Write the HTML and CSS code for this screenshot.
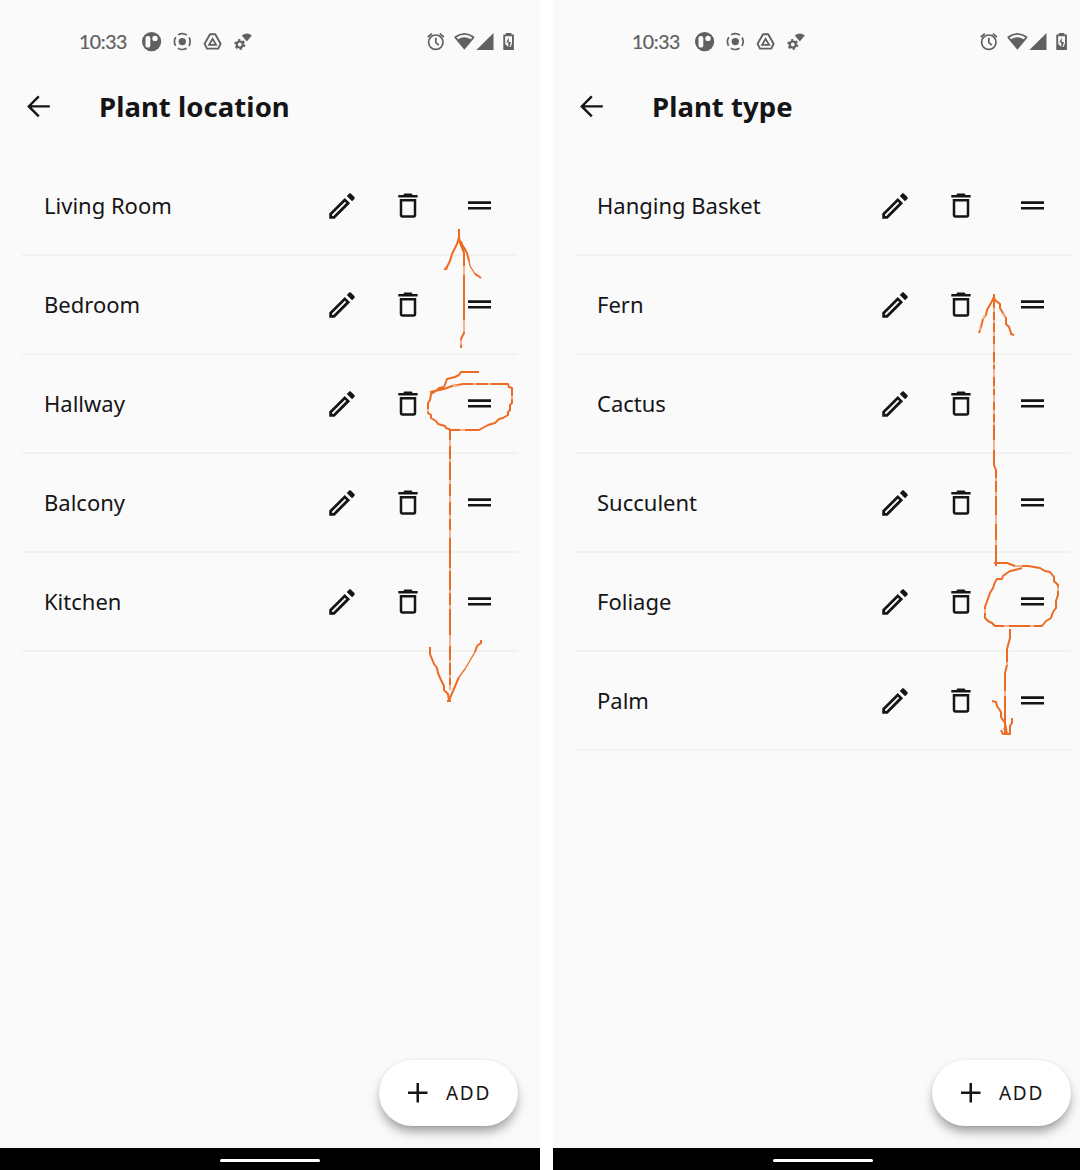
FILE: index.html
```
<!DOCTYPE html>
<html lang="en">
<head>
<meta charset="utf-8">
<title>Plant settings</title>
<link rel="stylesheet" href="styles.css">
<script src="lists.js" defer></script>
</head>
<body>
<svg class="sprite" aria-hidden="true">
  <symbol id="left-status" viewBox="0 0 120 24">
    <circle cx="14.600" cy="11.600" r="9.600"/>
    <rect x="8.500" y="6" width="4.800" height="11.600" rx="2.200" fill="#fafafa"/>
    <circle cx="18" cy="8.400" r="2.700" fill="#fafafa"/>
    <circle cx="45.300" cy="11.600" r="3.700"/>
    <circle cx="45.300" cy="11.600" r="7.900" fill="none" stroke="currentColor" stroke-width="1.700" stroke-dasharray="9.200 3.210" stroke-dashoffset="4.600"/>
    <path d="M73 4.200h5.200l5.400 9.600-2.400 4.800H70l-2.400-4.800z" fill="none" stroke="currentColor" stroke-width="1.900" stroke-linejoin="round"/>
    <path d="M75.600 8.900l3.500 6h-7z" fill="none" stroke="currentColor" stroke-width="1.800"/>
    <circle cx="102.800" cy="14.500" r="3" fill="none" stroke="currentColor" stroke-width="2.200"/>
    <circle cx="102.800" cy="14.500" r="4.600" fill="none" stroke="currentColor" stroke-width="1.800" stroke-dasharray="2.400 2.417"/>
    <path d="M104.800 5.400q5-3.800 10 0l-5 6z"/>
  </symbol>
  <symbol id="right-status" viewBox="0 0 96 24">
    <circle cx="15.800" cy="12.200" r="7.200" fill="none" stroke="currentColor" stroke-width="1.700"/>
    <path d="M15.800 7.700v4.900l3 2.500M7.800 7l4-3.400M23.800 7l-4-3.400" fill="none" stroke="currentColor" stroke-width="1.700"/>
    <path d="M35 7.300q9.400-6.800 18.800 0" fill="none" stroke="currentColor" stroke-width="1.800"/>
    <path d="M34.200 7.400L44.400 19.700 54.600 7.400 53 6.400 50.800 9.200q-6.400-4-12.800 0L35.800 6.400z"/>
    <path d="M56.400 20L73.500 3v17z"/>
    <path d="M83.300 4.400h2.500V3h5.600v1.400h2.500V20H83.300z"/>
    <path d="M85.200 6.200h6.800v7.300l-1.500 3.500h-1l1.500-5h-2.200V7.400L86.300 12.600h2v4.400L85.200 14z" fill="#fafafa"/>
  </symbol>
  <symbol id="back" viewBox="0 0 24 24"><path d="M11.800 1.400L1.800 11.400l10 10M2 11.400h20.800" fill="none" stroke="currentColor" stroke-width="2.400"/></symbol>
  <symbol id="edit" viewBox="0 0 24 24"><path d="M14.060 9.020l.920.920L5.920 19H5v-.920l9.060-9.060M17.660 3c-.250 0-.510.100-.700.290l-1.600 1.600 3.750 3.750 1.600-1.600c.390-.390.390-1.020 0-1.410l-2.340-2.340c-.200-.200-.450-.290-.710-.290zm-3.700 3.290L3 17.250V21h3.750L17.710 10.040l-3.750-3.750z"/></symbol>
  <symbol id="trash" viewBox="0 0 20 26">
    <path d="M.3 1.900h5l1-1.300h7.300l1 1.300h5v2.500H.3z"/>
    <path d="M3 7.200h14v14.900q0 1.400-1.400 1.400H4.400Q3 23.500 3 22.100z" fill="none" stroke="currentColor" stroke-width="2.500"/>
  </symbol>
  <symbol id="handle" viewBox="0 0 23 9"><path d="M0 .3h23v2.600H0zM0 6h23v2.600H0z"/></symbol>
  <symbol id="plus" viewBox="0 0 20 20"><path d="M8.500 0h2.500v8.500h8.500v2.500H11v8.500H8.500V11H0V8.500h8.500z"/></symbol>
</svg>
<main class="screens">
  <section class="phone">
    <header class="status"><span class="clock">10:33</span><svg class="status-left"><use href="#left-status"/></svg><svg class="status-right"><use href="#right-status"/></svg></header>
    <div class="appbar"><svg class="back"><use href="#back"/></svg><h1>Plant location</h1></div>
    <ul class="list" data-items="Living Room,Bedroom,Hallway,Balcony,Kitchen"></ul>
    <div class="actions"><button class="add"><svg class="plus"><use href="#plus"/></svg><span>ADD</span></button></div>
    <footer class="navbar"><i></i></footer>
    <svg class="ink" viewBox="0 0 540 1170">
      <path d="M459 229v8l-2 7-5 10-2 7-3 6-1 3M459 237l1 6 2 5 2 5v80l-3 6v9M461 241l2 6 4 6 2 8M475 274l2 1 4 3"/>
      <path class="thin" d="M446 267l-2 3M469 261l1 5 5 8M460 241l6 9"/>
      <path d="M479 372h-18l-2 3-4 2-4 1-4 1-3 8M430 392l14-3 8-3 11-2h45l1 3 3 1v15l-2 2v5l-2 2v3l-5 3-4 1-4 4-7 2-9 5h-28l-5-2-1-2-7-2-2-3-5-3v-3l-3-2v-10l2-3 1-6 5-3 3-3 5-1M450 430v260"/>
      <path d="M430 647v7l4 10 3 4 1 5 3 7 3 6v4l4 4 1 7 1-3 9-21M481 640v3l-4 3-2 6M447 701h4"/>
      <path class="thin" d="M475 652l-10 17-6 8"/>
      <path class="gaps" d="M450 440v6M450 459v3M450 480v4M450 496v6M450 515v4M450 530v8M450 568v3M450 590v3M450 605v4M450 635v11M450 660v3M450 675v3M450 685v5M464 266v9M464 320v12M461 340v5M453 386h5M473 384h3M488 384h3M460 430h5M512 396v3M428 409v3"/>
    </svg>
  </section>
  <section class="phone">
    <header class="status"><span class="clock">10:33</span><svg class="status-left"><use href="#left-status"/></svg><svg class="status-right"><use href="#right-status"/></svg></header>
    <div class="appbar"><svg class="back"><use href="#back"/></svg><h1>Plant type</h1></div>
    <ul class="list" data-items="Hanging Basket,Fern,Cactus,Succulent,Foliage,Palm"></ul>
    <div class="actions"><button class="add"><svg class="plus"><use href="#plus"/></svg><span>ADD</span></button></div>
    <footer class="navbar"><i></i></footer>
    <svg class="ink" viewBox="0 0 540 1170">
      <path d="M441 294v171l2 5v96M441 297l-3 6-4 7-1 5-3 4-2 8-2 6M441 297l1 3 5 4v4l4 7 2 3v6l3 3 2 6v1l3 1"/>
      <path d="M441 563h13l8 3h13l12 2 5 3 5 1 4 5v4l4 4v10l-2 6v7l-3 4-2 6-5 3-4 5h-47l-3-3-4-2-3-3v-11l5-14 3-5 2-6 2-3h5l1-3 4-3 3-2 5-1 7-2"/>
      <path d="M457 629v9l-3 11v16l-2 8v61M439 701l4 1 1 4 4 6v5l4 6 2 11M459 718v5l-2 3v8h-7l-2-4M454 734l-3-6"/>
      <path class="gaps" d="M441 308v4M441 320v3M441 332v4M441 344v8M441 362v3M441 369v8M441 386v3M441 395v7M441 410v4M441 422v3M441 440v10M443 478v3M443 492v4M443 515v9M443 540v5M452 691v5M454 662v3M430 319l2-4M427 330v-3M449 313l3 4M462 566h7M451 626h5M477 626h4M505 587v4M432 609v4"/>
    </svg>
  </section>
</main>
</body>
</html>
```
FILE: styles.css
```
* { box-sizing: border-box; }
body { margin: 0; background: #fff; font-family: "Noto Sans", sans-serif; color: #151517; }
svg { display: block; fill: currentColor; flex: none; }
.sprite { position: absolute; width: 0; height: 0; }
.screens { display: grid; grid-template-columns: 540px 540px; column-gap: 13px; width: 1080px; height: 1170px; overflow: hidden; }
.phone { position: relative; display: flex; flex-direction: column; height: 1170px; background: #fafafa; }
.status { display: flex; align-items: center; height: 60px; padding: 24px 24px 0 79px; color: #606060; }
.clock { width: 58px; font: 400 19.5px/36px "Lato", sans-serif; letter-spacing: -.45px; -webkit-text-stroke: .2px; }
.status-left { width: 120px; height: 24px; margin-top: -1px; }
.status-right { width: 96px; height: 24px; margin-left: auto; margin-top: -1px; }
.appbar { display: flex; align-items: center; height: 97px; padding: 0 27px 4px; }
.back { width: 24px; height: 24px; }
h1 { margin: 0 0 0 48px; font-size: 27.5px; line-height: 36px; font-weight: 700; letter-spacing: .06px; }
.list { margin: 0 22px; padding: 0; list-style: none; }
.row { display: flex; align-items: center; height: 99px; padding: 0 27px 0 22px; border-bottom: 2px solid #f1f1f1; }
.name { flex: 1; padding-bottom: 2px; font-size: 22px; line-height: 30px; }
.edit { width: 34px; height: 34px; }
.trash { width: 20px; height: 26px; margin: 0 50px 0 39px; }
.handle { width: 23px; height: 9px; }
.actions { display: flex; justify-content: flex-end; margin-top: auto; padding: 0 22px 22px 0; }
.add { display: flex; align-items: center; gap: 18px; width: 139px; height: 66px; padding: 0 0 0 29px; border: 0; border-radius: 33px; background: #fff; color: inherit; font: 400 19px/26px "Noto Sans", sans-serif; letter-spacing: 1.7px; box-shadow: 0 7px 12px -2px #0006, 0 0 3px #0001; }
.plus { width: 20px; height: 20px; }
.navbar { display: flex; justify-content: center; align-items: center; height: 22px; padding-top: 2px; background: #000; }
.navbar i { width: 100px; height: 3px; border-radius: 2px; background: #fff; }
.ink { position: absolute; inset: 0; width: 540px; height: 1170px; fill: none; stroke: #ed6b23; stroke-width: 2; stroke-linejoin: round; pointer-events: none; }
.gaps { stroke: #f6b28f; }
.thin { stroke-width: 1.3; }
```
FILE: lists.js
```
const icon = name => `<svg class="${name}"><use href="#${name}"/></svg>`;
document.querySelectorAll('.list').forEach(list => {
  list.innerHTML = list.dataset.items.split(',').map(item =>
    `<li class="row"><span class="name">${item}</span>${icon('edit')}${icon('trash')}${icon('handle')}</li>`).join('');
});
```
